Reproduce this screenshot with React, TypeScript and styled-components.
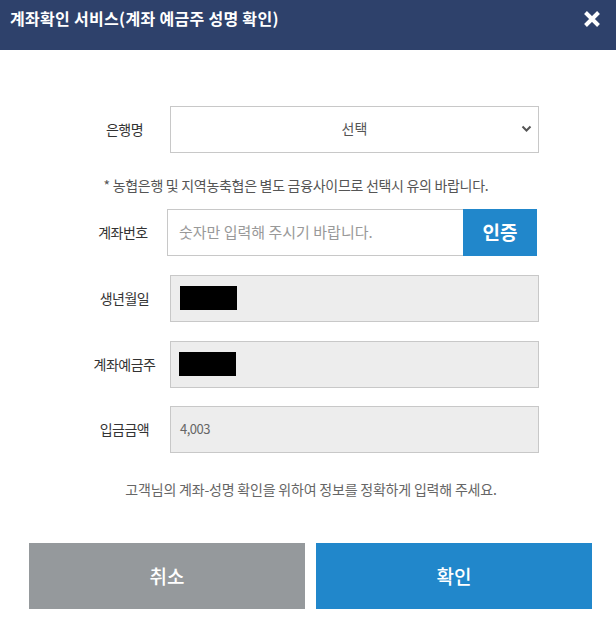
import React from "react";
import styled, { createGlobalStyle } from "styled-components";

const Global = createGlobalStyle`
  html, body { margin: 0; padding: 0; background: #ffffff; }
  body { font-family: "Noto Sans CJK KR", "Noto Sans", sans-serif; color: #333; }
  * { box-sizing: border-box; }
`;

const Dialog = styled.div`
  width: 616px;
  height: 626px;
  background: #fff;
  display: flex;
  flex-direction: column;
`;

const Header = styled.header`
  height: 50px;
  background: #2e416b;
  display: flex;
  align-items: flex-start;
  justify-content: space-between;
  padding: 6px 15px 0 10px;
`;

const Title = styled.h1`
  margin: 0;
  font-size: 16px;
  line-height: 24px;
  font-weight: 700;
  letter-spacing: 0.3px;
  color: #fff;
`;

const CloseButton = styled.button`
  border: 0;
  background: transparent;
  padding: 0;
  margin-top: 4px;
  width: 18px;
  height: 18px;
  cursor: pointer;
  display: flex;
`;

const Form = styled.form`
  display: flex;
  flex-direction: column;
  padding-top: 56px;
`;

const Row = styled.div<{ $labelWidth?: number; $fieldWidth?: number; $mt?: number }>`
  display: grid;
  grid-template-columns: ${(p) => p.$labelWidth ?? 91}px ${(p) => p.$fieldWidth ?? 369}px;
  margin-left: 79px;
  margin-top: ${(p) => p.$mt ?? 0}px;
  height: 47px;
  align-items: center;
`;

const Label = styled.label`
  font-size: 14px;
  letter-spacing: -0.5px;
  color: #333;
  text-align: center;
  line-height: 20px;
  padding-bottom: 2px;
`;

const SelectWrap = styled.div`
  position: relative;
  height: 47px;
`;

const Select = styled.select`
  appearance: none;
  width: 100%;
  height: 100%;
  border: 1px solid #c8c8c8;
  background: #fff;
  font-family: inherit;
  font-size: 14px;
  color: #555;
  text-align: center;
  text-align-last: center;
  outline: none;
  padding: 0 30px 3px;
`;

const Chevron = styled.svg`
  position: absolute;
  right: 7px;
  top: 19px;
  pointer-events: none;
`;

const Note = styled.p`
  margin: 23px 0 15px;
  padding-right: 24px;
  font-size: 14px;
  line-height: 18px;
  letter-spacing: -0.3px;
  color: #555;
  text-align: center;
`;

const AccountGroup = styled.div`
  display: flex;
  height: 47px;
`;

const TextInput = styled.input`
  flex: 1;
  min-width: 0;
  height: 100%;
  border: 1px solid #c8c8c8;
  border-right: 0;
  padding: 0 0 2px 11px;
  font-family: inherit;
  font-size: 15px;
  letter-spacing: 0;
  color: #333;
  outline: none;
  &::placeholder { color: #999; }
`;

const VerifyButton = styled.button`
  width: 74px;
  height: 100%;
  border: 0;
  background: #2187cb;
  color: #fff;
  font-family: inherit;
  font-size: 19px;
  font-weight: 700;
  padding: 0 0 3px;
  cursor: pointer;
`;

const ReadOnlyBox = styled.div`
  height: 47px;
  border: 1px solid #c8c8c8;
  background: #ededed;
  display: flex;
  align-items: center;
  padding: 0 0 2px 8px;
  font-size: 13px;
  color: #666;
`;

const Masked = styled.span<{ $offset?: number }>`
  display: block;
  width: 57px;
  height: 24px;
  background: #000;
  margin-left: ${(p) => p.$offset ?? 0}px;
`;

const Value = styled.span`
  padding-left: 1px;
  letter-spacing: -0.5px;
`;

const Notice = styled.p`
  margin: 27px 0 0;
  font-size: 14px;
  line-height: 18px;
  letter-spacing: -0.2px;
  color: #666;
  text-align: center;
  padding-left: 6px;
`;

const Actions = styled.div`
  display: flex;
  gap: 11px;
  padding-left: 29px;
  margin-top: 45px;
`;

const ActionButton = styled.button<{ $primary?: boolean }>`
  width: 276px;
  height: 66px;
  border: 0;
  background: ${(p) => (p.$primary ? "#2187cb" : "#95999c")};
  color: #fff;
  font-family: inherit;
  font-size: 19px;
  font-weight: 500;
  padding: 0 0 2px;
  cursor: pointer;
`;

export default function App() {
  return (
    <>
      <Global />
      <Dialog>
        <Header>
          <Title>계좌확인 서비스(계좌 예금주 성명 확인)</Title>
          <CloseButton aria-label="닫기">
            <svg width="18" height="18" viewBox="0 0 18 18">
              <path d="M2.5 2.5 L15.5 15.5 M15.5 2.5 L2.5 15.5" stroke="#fff" strokeWidth="4" strokeLinecap="butt" />
            </svg>
          </CloseButton>
        </Header>
        <Form onSubmit={(e) => e.preventDefault()}>
          <Row>
            <Label>은행명</Label>
            <SelectWrap>
              <Select defaultValue="">
                <option value="">선택</option>
              </Select>
              <Chevron width="11" height="8" viewBox="0 0 11 8">
                <path d="M1.5 1.5 L5.5 5.5 L9.5 1.5" stroke="#555" strokeWidth="2" fill="none" />
              </Chevron>
            </SelectWrap>
          </Row>
          <Note>* 농협은행 및 지역농축협은 별도 금융사이므로 선택시 유의 바랍니다.</Note>
          <Row $labelWidth={88} $fieldWidth={370}>
            <Label>계좌번호</Label>
            <AccountGroup>
              <TextInput placeholder="숫자만 입력해 주시기 바랍니다." />
              <VerifyButton type="button">인증</VerifyButton>
            </AccountGroup>
          </Row>
          <Row $mt={19}>
            <Label>생년월일</Label>
            <ReadOnlyBox>
              <Masked $offset={1} />
            </ReadOnlyBox>
          </Row>
          <Row $mt={19}>
            <Label>계좌예금주</Label>
            <ReadOnlyBox>
              <Masked />
            </ReadOnlyBox>
          </Row>
          <Row $mt={18}>
            <Label>입금금액</Label>
            <ReadOnlyBox>
              <Value>4,003</Value>
            </ReadOnlyBox>
          </Row>
          <Notice>고객님의 계좌-성명 확인을 위하여 정보를 정확하게 입력해 주세요.</Notice>
          <Actions>
            <ActionButton type="button">취소</ActionButton>
            <ActionButton type="submit" $primary>확인</ActionButton>
          </Actions>
        </Form>
      </Dialog>
    </>
  );
}
